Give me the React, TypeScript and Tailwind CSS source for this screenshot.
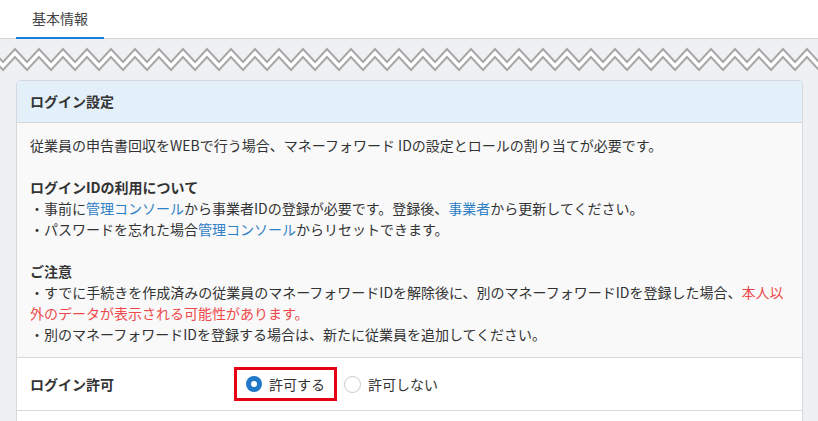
import React from "react";

function Zigzag() {
  const pts1: string[] = [];
  const pts2: string[] = [];
  for (let k = -1; k < 36; k++) {
    const xPeak = 15 + 24 * k;
    const xTrough = 3 + 24 * k;
    pts1.push(`${xTrough},16`, `${xPeak},3`);
    pts2.push(`${xTrough},24`, `${xPeak},11`);
  }
  pts1.push(`${3 + 24 * 36},16`);
  pts2.push(`${3 + 24 * 36},24`);
  const fill = [...pts1, ...[...pts2].reverse()].join(" ");
  return (
    <svg width="818" height="28" viewBox="0 0 818 28" className="block mt-[7px]">
      <polygon points={fill} fill="#ffffff" />
      <polyline points={pts1.join(" ")} fill="none" stroke="#a8a8a8" strokeWidth="2" />
      <polyline points={pts2.join(" ")} fill="none" stroke="#a8a8a8" strokeWidth="2" />
    </svg>
  );
}

export default function App() {
  return (
    <div
      className="w-[818px] h-[421px] overflow-hidden bg-[#eef0f4] text-[14px] text-[#333333]"
      style={{ fontFamily: '"Noto Sans CJK JP", "Noto Sans", sans-serif' }}
    >
      <div className="h-[39px] bg-white border-b border-[#d3d6db] flex pl-4">
        <div className="h-[39px] px-4 flex items-center border-b-2 border-[#1a7fdc] text-[#444444] pb-px">
          基本情報
        </div>
      </div>
      <Zigzag />
      <div className="ml-4 mr-[15px] mt-[6px] bg-white border border-[#d5d9de] rounded-[4px] overflow-hidden">
        <div className="h-[42px] bg-[#e3f0fa] border-b border-[#d5d9de] flex items-center px-[13px] font-bold">
          ログイン設定
        </div>
        <div className="bg-[#f9f9fa] border-b border-[#d5d9de] px-[13px] py-3 leading-[21px]">
          <p>従業員の申告書回収をWEBで行う場合、マネーフォワード IDの設定とロールの割り当てが必要です。</p>
          <p>&nbsp;</p>
          <p className="font-bold">ログインIDの利用について</p>
          <p>
            ・事前に<span className="text-[#2f80c5]">管理コンソール</span>から事業者IDの登録が必要です。登録後、<span className="text-[#2f80c5]">事業者</span>から更新してください。
          </p>
          <p>
            ・パスワードを忘れた場合<span className="text-[#2f80c5]">管理コンソール</span>からリセットできます。
          </p>
          <p>&nbsp;</p>
          <p className="font-bold">ご注意</p>
          <p>
            ・すでに手続きを作成済みの従業員のマネーフォワードIDを解除後に、別のマネーフォワードIDを登録した場合、<span className="text-[#ef4a4a]">本人以外のデータが表示される可能性があります。</span>
          </p>
          <p>・別のマネーフォワードIDを登録する場合は、新たに従業員を追加してください。</p>
        </div>
        <div className="h-[53px] border-b border-[#d5d9de] flex items-center px-[13px]">
          <div className="w-[204px] font-bold">ログイン許可</div>
          <div className="flex items-center">
            <div className="h-[34px] border-[3px] border-[#e60012] flex items-center pl-[9px] pr-[9px]">
              <span className="w-[16px] h-[16px] rounded-full bg-[#1f78c8] flex items-center justify-center">
                <span className="w-[6px] h-[6px] rounded-full bg-white" />
              </span>
              <span className="ml-[7px]">許可する</span>
            </div>
            <div className="flex items-center ml-[7px]">
              <span className="w-[17px] h-[17px] rounded-full border border-[#c8c8c8] bg-white" />
              <span className="ml-[7px]">許可しない</span>
            </div>
          </div>
        </div>
        <div className="h-[40px] bg-white" />
      </div>
    </div>
  );
}
